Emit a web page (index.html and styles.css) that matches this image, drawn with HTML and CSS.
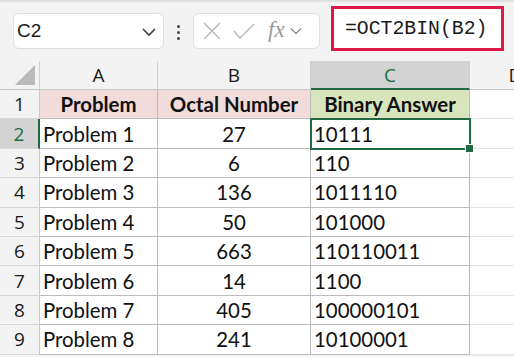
FILE: index.html
```html
<!DOCTYPE html>
<html lang="en">
<head>
    <meta charset="UTF-8">
    <title>OCT2BIN</title>
    <link rel="stylesheet" href="styles.css">
</head>
<body>
    <div class="toolbar-edge"></div>
    <div class="formula-bar">
        <div class="name-box">
            <span class="name-text">C2</span>
            <svg class="chevron" width="16" height="10" viewBox="0 0 16 10"><path d="M2 2 L8 8 L14 2" fill="none" stroke="#3c3c3c" stroke-width="1.6"/></svg>
        </div>
        <div class="bar-dots">
            <span></span><span></span><span></span>
        </div>
        <div class="fx-box">
            <svg width="20" height="20" viewBox="0 0 20 20"><path d="M2 2 L18 18 M18 2 L2 18" stroke="#b4b4b4" stroke-width="1.4"/></svg>
            <svg width="22" height="20" viewBox="0 0 22 20"><path d="M1 10 L7 17 L21 3" fill="none" stroke="#b4b4b4" stroke-width="1.4"/></svg>
            <span class="fx-text">fx</span>
            <svg width="12" height="8" viewBox="0 0 12 8"><path d="M1 1.5 L6 6.5 L11 1.5" fill="none" stroke="#8a8a8a" stroke-width="1.3"/></svg>
        </div>
        <div class="formula-input">=OCT2BIN(B2)</div>
    </div>

    <div class="sheet">
        <div class="col-head corner"><span class="corner-tri"></span></div>
        <div class="col-head">A</div>
        <div class="col-head">B</div>
        <div class="col-head active">C</div>
        <div class="col-head">D</div>

        <div class="row-head">1</div>
        <div class="cell head pink">Problem</div>
        <div class="cell head pink">Octal Number</div>
        <div class="cell head green">Binary Answer</div>
        <div class="cell empty"></div>

        <div class="row-head active">2</div>
        <div class="cell">Problem 1</div>
        <div class="cell num">27</div>
        <div class="cell selected">10111</div>
        <div class="cell empty"></div>

        <div class="row-head">3</div>
        <div class="cell">Problem 2</div>
        <div class="cell num">6</div>
        <div class="cell">110</div>
        <div class="cell empty"></div>

        <div class="row-head">4</div>
        <div class="cell">Problem 3</div>
        <div class="cell num">136</div>
        <div class="cell">1011110</div>
        <div class="cell empty"></div>

        <div class="row-head">5</div>
        <div class="cell">Problem 4</div>
        <div class="cell num">50</div>
        <div class="cell">101000</div>
        <div class="cell empty"></div>

        <div class="row-head">6</div>
        <div class="cell">Problem 5</div>
        <div class="cell num">663</div>
        <div class="cell">110110011</div>
        <div class="cell empty"></div>

        <div class="row-head">7</div>
        <div class="cell">Problem 6</div>
        <div class="cell num">14</div>
        <div class="cell">1100</div>
        <div class="cell empty"></div>

        <div class="row-head">8</div>
        <div class="cell">Problem 7</div>
        <div class="cell num">405</div>
        <div class="cell">100000101</div>
        <div class="cell empty"></div>

        <div class="row-head">9</div>
        <div class="cell">Problem 8</div>
        <div class="cell num">241</div>
        <div class="cell">10100001</div>
        <div class="cell empty"></div>
    </div>
</body>
</html>
```

FILE: styles.css
```css
* {
    margin: 0;
    padding: 0;
    box-sizing: border-box;
}

body {
    width: 514px;
    height: 357px;
    overflow: hidden;
    background: #f3f3f3;
    font-family: 'Open Sans', 'Noto Sans', sans-serif;
}

.toolbar-edge {
    height: 3px;
    background: linear-gradient(#dcdcdc, #eeeeee);
}

.formula-bar {
    height: 58px;
    display: flex;
    align-items: flex-start;
}

.name-box {
    margin: 10px 0 0 13px;
    width: 151px;
    height: 36px;
    background: white;
    border: 1px solid #dedede;
    border-radius: 6px;
    display: flex;
    align-items: center;
    justify-content: space-between;
    padding: 0 6px 0 3px;
}

.name-text {
    font-family: 'Liberation Sans', Arial, sans-serif;
    font-size: 19px;
    color: #1a1a1a;
}

.chevron {
    margin-top: 1px;
}

.bar-dots {
    margin: 22px 0 0 13px;
    width: 6px;
    display: flex;
    flex-direction: column;
    gap: 3px;
}

.bar-dots span {
    width: 3px;
    height: 3px;
    background: #444;
    border-radius: 50%;
}

.fx-box {
    margin: 10px 0 0 10px;
    width: 127px;
    height: 36px;
    background: white;
    border: 1px solid #dedede;
    border-radius: 6px;
    display: flex;
    align-items: center;
    padding: 0 0 0 8px;
    gap: 11px;
}

.fx-text {
    font-family: 'Liberation Serif', 'Times New Roman', serif;
    font-style: italic;
    font-size: 23px;
    color: #9a9a9a;
    margin: -3px -6px 0 2px;
}

.formula-input {
    margin: 3px 0 0 11px;
    width: 173px;
    height: 45px;
    background: white;
    border: 3px solid #e0174a;
    padding: 0 0 0 11px;
    display: flex;
    align-items: center;
    font-family: 'Liberation Mono', 'DejaVu Sans Mono', monospace;
    font-size: 19.8px;
    color: #1a1a1a;
}

.sheet {
    display: grid;
    grid-template-columns: 40px 118px 153px 159px 92px;
    grid-template-rows: 29px repeat(9, 29.4px);
    background: white;
}

.col-head {
    background: #f3f3f3;
    border-right: 1px solid #d0d0d0;
    border-bottom: 1px solid #c8c8c8;
    display: flex;
    align-items: center;
    justify-content: center;
    font-size: 19px;
    color: #1a1a1a;
}

.col-head.active {
    background: #d3d3d3;
    color: #1e6b41;
    border-bottom: 2px solid #1e6b41;
}

.col-head.corner {
    justify-content: flex-end;
    align-items: flex-end;
    padding: 0 4px 4px 0;
}

.corner-tri {
    width: 0;
    height: 0;
    border-left: 20px solid transparent;
    border-bottom: 20px solid #b9b9b9;
}

.row-head {
    background: #f3f3f3;
    border-right: 1px solid #c8c8c8;
    border-bottom: 1px solid #d8d8d8;
    display: flex;
    align-items: center;
    justify-content: center;
    font-size: 19px;
    color: #1a1a1a;
}

.row-head.active {
    background: #d3d3d3;
    color: #1e6b41;
    border-right: 2px solid #1e6b41;
}

.cell {
    border-right: 1px solid #bcbcbc;
    border-bottom: 1px solid #bcbcbc;
    display: flex;
    align-items: center;
    padding: 0 3px;
    font-family: 'Lato', 'Open Sans', sans-serif;
    font-size: 20.4px;
    color: #111;
    white-space: nowrap;
}

.cell.num {
    justify-content: center;
}

.cell.head {
    justify-content: center;
    font-weight: bold;
}

.cell.pink {
    background: #f2dcdb;
}

.cell.green {
    background: #d8e4bc;
}

.cell.empty {
    border-right: none;
    border-bottom: 1px solid #e2e2e2;
}

.cell.selected {
    position: relative;
}

.cell.selected::after {
    content: '';
    position: absolute;
    left: -1px;
    top: -1px;
    right: -2px;
    bottom: -2px;
    border: 2px solid #1e6b41;
}

.cell.selected::before {
    content: '';
    position: absolute;
    right: -5px;
    bottom: -5px;
    width: 7px;
    height: 7px;
    background: #1e6b41;
    border: 1px solid white;
    z-index: 1;
}
```
